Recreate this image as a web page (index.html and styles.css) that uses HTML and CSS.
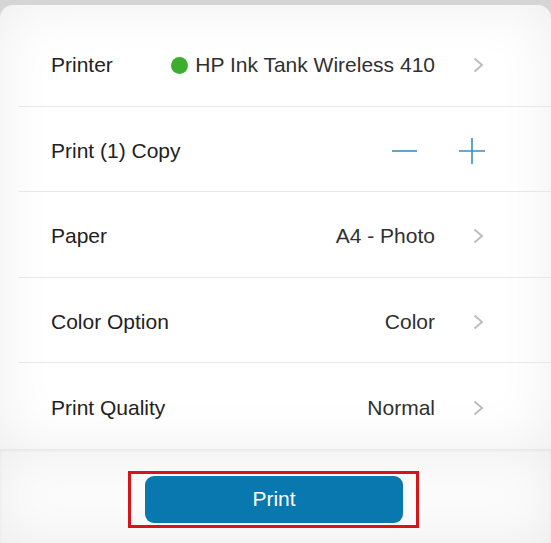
FILE: index.html
```html
<!DOCTYPE html>
<html>
<head>
<meta charset="utf-8">
<link rel="stylesheet" href="styles.css">
</head>
<body>
<div class="screen">
  <div class="card">
    <div class="row">
      <span class="label">Printer</span>
      <span class="value"><span class="dot"></span>HP Ink Tank Wireless 410</span>
      <svg class="chev" width="11" height="16" viewBox="0 0 11 16"><path d="M1.5 1.5 L9 8 L1.5 14.5" fill="none" stroke="#bdbdbd" stroke-width="2"/></svg>
    </div>
    <div class="row">
      <span class="label">Print (1) Copy</span>
      <span class="stepper">
        <svg width="26" height="26" viewBox="0 0 26 26"><path d="M0 13 H25" stroke="#3a8ec2" stroke-width="1.6"/></svg>
        <svg width="26" height="26" viewBox="0 0 26 26"><path d="M0 13 H26 M13 0 V26" stroke="#3a8ec2" stroke-width="1.6"/></svg>
      </span>
    </div>
    <div class="row">
      <span class="label">Paper</span>
      <span class="value">A4 - Photo</span>
      <svg class="chev" width="11" height="16" viewBox="0 0 11 16"><path d="M1.5 1.5 L9 8 L1.5 14.5" fill="none" stroke="#bdbdbd" stroke-width="2"/></svg>
    </div>
    <div class="row">
      <span class="label">Color Option</span>
      <span class="value">Color</span>
      <svg class="chev" width="11" height="16" viewBox="0 0 11 16"><path d="M1.5 1.5 L9 8 L1.5 14.5" fill="none" stroke="#bdbdbd" stroke-width="2"/></svg>
    </div>
    <div class="row last">
      <span class="label">Print Quality</span>
      <span class="value">Normal</span>
      <svg class="chev" width="11" height="16" viewBox="0 0 11 16"><path d="M1.5 1.5 L9 8 L1.5 14.5" fill="none" stroke="#bdbdbd" stroke-width="2"/></svg>
    </div>
  </div>
  <div class="footer">
    <div class="highlight">
      <button class="print-btn">Print</button>
    </div>
  </div>
</div>
</body>
</html>
```
FILE: styles.css
```css
html, body {
  margin: 0;
  padding: 0;
}
body {
  width: 551px;
  height: 543px;
  overflow: hidden;
  background: #d5d5d5;
  font-family: "Liberation Sans", Arial, sans-serif;
}
.screen {
  padding-top: 5px;
  display: flex;
  flex-direction: column;
  height: 538px;
}
.card {
  background: #ffffff;
  border-radius: 13px 13px 0 0;
  padding-top: 16px;
  box-shadow: inset 0 0 55px rgba(0, 0, 0, 0.07);
  height: 427.5px;
  box-sizing: content-box;
}
.row {
  height: 85.5px;
  box-sizing: border-box;
  margin-left: 19px;
  padding-left: 32px;
  padding-right: 67px;
  padding-top: 4px;
  border-bottom: 1px solid #e7e7e7;
  display: flex;
  align-items: center;
  font-size: 21px;
  color: #222222;
}
.row.last {
  border-bottom: none;
}
.label {
  flex: 1;
}
.value {
  display: flex;
  align-items: center;
  color: #303030;
}
.dot {
  width: 17px;
  height: 17px;
  border-radius: 50%;
  background: #3aae2e;
  margin-right: 7px;
}
.chev {
  margin-left: 38px;
  display: block;
}
.stepper {
  display: flex;
  align-items: center;
  gap: 41px;
  margin-right: -1px;
}
.stepper svg {
  display: block;
}
.footer {
  flex: 1;
  background: #fbfbfb;
  box-shadow: inset 0 0 50px rgba(0, 0, 0, 0.06), inset 0 2px 3px rgba(0, 0, 0, 0.05);
  display: flex;
  justify-content: center;
  padding-top: 22px;
  padding-right: 4px;
  box-sizing: border-box;
}
.highlight {
  border: 3px solid #d8141b;
  padding: 2px 13px 2px 14px;
  height: 57px;
  box-sizing: border-box;
}
.print-btn {
  width: 258px;
  height: 47px;
  border: none;
  border-radius: 9px;
  background: #0878ae;
  color: #ffffff;
  font-family: "Liberation Sans", Arial, sans-serif;
  font-size: 21px;
  padding: 0;
}
```
